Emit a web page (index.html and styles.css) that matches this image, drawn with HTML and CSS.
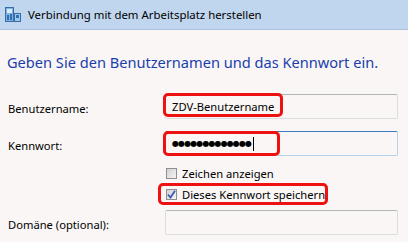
FILE: index.html
```html
<!DOCTYPE html>
<html lang="de">
<head>
    <meta charset="UTF-8">
    <title>Verbindung mit dem Arbeitsplatz herstellen</title>
    <link rel="stylesheet" href="styles.css">
</head>
<body>

    <div class="titlebar">
        <svg class="app-icon" width="16" height="15" viewBox="0 0 16 15">
            <rect x="0.5" y="0.5" width="8" height="14" fill="#7fb2e0" stroke="#3a6ea8"/>
            <rect x="2" y="2" width="5" height="4" fill="#d8ecfb"/>
            <rect x="2" y="8" width="2" height="5" fill="#2f6fb3"/>
            <rect x="5" y="7" width="2" height="6" fill="#2f6fb3"/>
            <rect x="9.5" y="6.5" width="6" height="8" fill="#9cc6ea" stroke="#3a6ea8"/>
            <rect x="11" y="8" width="3" height="3" fill="#2f6fb3"/>
        </svg>
        <span class="title">Verbindung mit dem Arbeitsplatz herstellen</span>
    </div>

    <div class="content">
        <h1 class="instruction">Geben Sie den Benutzernamen und das Kennwort ein.</h1>

        <div class="form-row">
            <label class="field-label">Benutzername:</label>
            <div class="field">
                <div class="textbox">ZDV-Benutzername</div>
                <span class="mark mark-user"></span>
            </div>
        </div>

        <div class="form-row row-pass">
            <label class="field-label">Kennwort:</label>
            <div class="field">
                <div class="textbox focused"><span class="dots">&#9679;&#9679;&#9679;&#9679;&#9679;&#9679;&#9679;&#9679;&#9679;&#9679;&#9679;&#9679;&#9679;</span><span class="caret"></span></div>
                <span class="mark mark-pass"></span>
            </div>
        </div>

        <div class="check-group">
            <div class="check-row">
                <span class="checkbox"></span>
                <span>Zeichen anzeigen</span>
            </div>
            <div class="check-row">
                <span class="checkbox checked">
                    <svg width="9" height="9" viewBox="0 0 9 9"><path d="M1 4.5 L3.5 7.5 L8 0.8" fill="none" stroke="#3b5bb5" stroke-width="1.8"/></svg>
                </span>
                <span>Dieses Kennwort speichern</span>
                <span class="mark mark-check"></span>
            </div>
        </div>

        <div class="form-row row-domain">
            <label class="field-label">Domäne (optional):</label>
            <div class="field">
                <div class="textbox"></div>
            </div>
        </div>
    </div>

</body>
</html>
```

FILE: styles.css
```css
body {
    margin: 0;
    width: 408px;
    height: 242px;
    overflow: hidden;
    background-color: #f9f6f5;
    font-family: "Noto Sans", Arial, sans-serif;
    font-size: 11.2px;
    color: #000;
}

.titlebar {
    display: flex;
    align-items: center;
    height: 29px;
    padding-left: 5px;
    background-color: #c0d6ee;
    border-bottom: 1px solid #a9c1dc;
}
.app-icon {
    margin-right: 7px;
}
.title {
    font-size: 11.4px;
}

.content {
    padding: 0 10px 0 8px;
}
.instruction {
    margin: 22px 0 0 -1px;
    font-size: 14.6px;
    font-weight: normal;
    line-height: 20px;
    color: #1b3ead;
}

.form-row {
    display: flex;
    align-items: center;
    margin-top: 22px;
    height: 25px;
}
.row-pass {
    margin-top: 12px;
}
.row-domain {
    margin-top: 5px;
}
.field-label {
    width: 157px;
    padding-top: 3px;
}
.field {
    position: relative;
    width: 233px;
    height: 25px;
}
.textbox {
    box-sizing: border-box;
    display: flex;
    align-items: center;
    height: 25px;
    padding-left: 6px;
    border: 1px solid #dcdde0;
    border-top-color: #b4b5b9;
    border-radius: 2px;
}
.textbox.focused {
    border-color: #b6d2ea;
    border-top-color: #3d7dbf;
}
.dots {
    font-family: "DejaVu Sans", sans-serif;
    font-size: 8px;
    letter-spacing: -0.9px;
}
.caret {
    width: 1px;
    height: 14px;
    margin-left: 2px;
    background-color: #000;
}

.check-group {
    margin-top: 7px;
    margin-left: 157px;
}
.check-row {
    position: relative;
    display: flex;
    align-items: center;
    height: 21px;
}
.checkbox {
    box-sizing: border-box;
    display: flex;
    align-items: center;
    justify-content: center;
    width: 11px;
    height: 11px;
    margin: 0 5px 0 1px;
    border: 1px solid #8f8f8f;
    background: linear-gradient(135deg, #d2d2d2, #f4f4f4);
}

/* rote Markierungen */
.mark {
    position: absolute;
    box-sizing: border-box;
    border: 3px solid #ee1111;
    border-radius: 5px;
}
.mark-user {
    left: -2px;
    top: -1px;
    width: 120px;
    height: 24px;
}
.mark-pass {
    left: -2px;
    top: 0;
    width: 117px;
    height: 25px;
}
.mark-check {
    left: -7px;
    top: -1px;
    width: 170px;
    height: 22px;
}
```
